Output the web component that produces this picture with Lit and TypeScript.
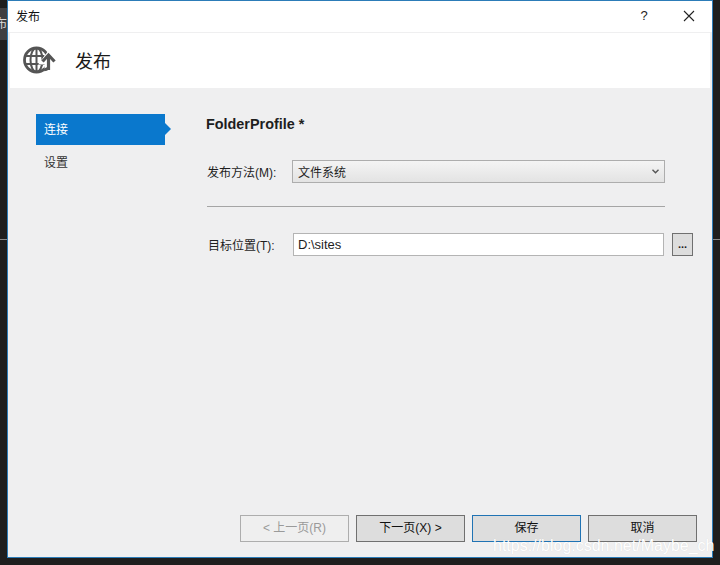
import { LitElement, html, css } from "lit";
import { customElement } from "lit/decorators.js";

@customElement("app-root")
export class AppRoot extends LitElement {
  static styles = css`
    :host {
      display: block;
      width: 720px;
      height: 565px;
      position: relative;
      overflow: hidden;
      background: #1e1e1e;
      font-family: "Liberation Sans", "Noto Sans CJK SC", sans-serif;
      font-size: 12px;
      color: #1e1e1e;
    }
    .tab {
      position: absolute;
      left: 0;
      top: 8px;
      width: 7px;
      height: 32px;
      background: #3f3f41;
      color: #ddd;
      overflow: hidden;
      font-size: 12px;
      line-height: 32px;
      text-indent: -5px;
      white-space: nowrap;
    }
    .line-l, .line-r {
      position: absolute;
      top: 239px;
      height: 1px;
      background: #8a8a8a;
    }
    .line-l { left: 0; width: 7px; }
    .line-r { left: 713px; width: 7px; }
    .window {
      position: absolute;
      left: 7px;
      top: 0;
      width: 706px;
      height: 558px;
      box-sizing: border-box;
      border: 1px solid #2c7cb8;
      background: #efeff0;
      display: flex;
      flex-direction: column;
    }
    .titlebar {
      height: 31px;
      flex: none;
      box-sizing: border-box;
      background: #fff;
      display: flex;
      align-items: center;
      padding: 0 17px 2px 8px;
      font-size: 12px;
      color: #111;
    }
    .titlebar .t { flex: 1; }
    .help {
      font-size: 13px;
      width: 16px;
      text-align: center;
      margin-right: 31px;
      color: #222;
    }
    .banner {
      height: 55px;
      flex: none;
      box-sizing: border-box;
      background: #fff;
      margin: 1px 2px 0 2px;
      display: flex;
      align-items: center;
      padding: 0 0 1px 13px;
      font-size: 18px;
      color: #1a1a1a;
    }
    .banner svg { margin-right: 18px; flex: none; }
    .body {
      flex: 1;
      display: flex;
      min-height: 0;
    }
    .nav {
      width: 199px;
      flex: none;
      padding: 26px 0 0 28px;
      box-sizing: border-box;
    }
    .nav-item {
      width: 129px;
      height: 31px;
      line-height: 33px;
      padding-left: 8px;
      box-sizing: border-box;
      position: relative;
      margin-bottom: 2px;
      color: #333;
    }
    .nav-item.on { background: #0a78cd; color: #fff; }
    .nav-item.on::after {
      content: "";
      position: absolute;
      left: 129px;
      top: 9px;
      border-left: 6px solid #0a78cd;
      border-top: 6px solid transparent;
      border-bottom: 6px solid transparent;
    }
    .main {
      flex: 1;
      display: flex;
      flex-direction: column;
      padding-top: 26px;
      min-width: 0;
    }
    .heading {
      font-weight: bold;
      font-size: 14.4px;
      height: 20px;
      line-height: 20px;
      color: #1e1e1e;
      margin-left: -1px;
      margin-bottom: 26px;
    }
    .row {
      display: flex;
      align-items: center;
      height: 23px;
    }
    .row label { width: 85px; flex: none; }
    .select {
      width: 373px;
      height: 23px;
      box-sizing: border-box;
      border: 1px solid #adadad;
      background: linear-gradient(#f4f4f4, #e3e3e3);
      display: flex;
      align-items: center;
      justify-content: space-between;
      padding: 0 5px;
    }
    hr {
      width: 458px;
      margin: 23px 0 26px;
      border: 0;
      border-top: 1px solid #a5a5a5;
      height: 0;
    }
    .row.target { margin-left: 1px; }
    .input {
      width: 371px;
      height: 23px;
      box-sizing: border-box;
      border: 1px solid #b4b4b4;
      background: #fff;
      font-size: 13px;
      line-height: 21px;
      padding: 0 4px;
    }
    .browse {
      width: 21px;
      height: 23px;
      box-sizing: border-box;
      margin-left: 8px;
      border: 1px solid #707070;
      background: #dddddd;
      text-align: center;
      font-size: 11px;
      line-height: 21px;
      font-weight: bold;
    }
    .footer {
      flex: none;
      display: flex;
      gap: 7px;
      padding: 0 0 15px 232px;
    }
    .btn {
      width: 109px;
      height: 27px;
      box-sizing: border-box;
      border: 1px solid #707070;
      background: #dddddd;
      text-align: center;
      line-height: 25px;
      color: #111;
    }
    .btn.disabled { border-color: #adadad; background: #efefef; color: #9a9a9a; }
    .btn.default { border-color: #2073b4; }
    .watermark {
      position: absolute;
      left: 493px;
      top: 534px;
      font-size: 16px;
      color: #fff;
      text-shadow: 0 0 1px rgba(0, 0, 0, 0.12);
      white-space: nowrap;
      line-height: 24px;
    }
  `;

  render() {
    return html`
      <div class="tab">布</div>
      <div class="line-l"></div>
      <div class="line-r"></div>
      <div class="window">
        <div class="titlebar">
          <span class="t">发布</span>
          <span class="help">?</span>
          <svg width="12" height="12" viewBox="0 0 12 12">
            <path d="M1 1L11 11M11 1L1 11" stroke="#222" stroke-width="1.1" fill="none" />
          </svg>
        </div>
        <div class="banner">
          <svg width="34" height="28" viewBox="0 0 34 28">
            <g fill="none" stroke="#555">
              <circle cx="13.5" cy="14" r="12" stroke-width="2.8" />
              <ellipse cx="13.5" cy="14" rx="6" ry="12" stroke-width="2" />
              <path d="M13.5 2V26M2 10H25M2 18H25" stroke-width="2" />
            </g>
            <path d="M25.5 28V9" fill="none" stroke="#fff" stroke-width="8" />
            <path d="M18 17L25.5 7L33 17Z" fill="#fff" stroke="#fff" stroke-width="3" />
            <path d="M25.5 24V10" fill="none" stroke="#555" stroke-width="3.2" />
            <path d="M19.5 15.5L25.5 9L31.5 15.5" fill="none" stroke="#555" stroke-width="3.2" />
            <path d="M25.5 22A12 12 0 0 1 21 24" fill="none" stroke="#555" stroke-width="2.8" />
          </svg>
          <span>发布</span>
        </div>
        <div class="body">
          <div class="nav">
            <div class="nav-item on">连接</div>
            <div class="nav-item">设置</div>
          </div>
          <div class="main">
            <div class="heading">FolderProfile *</div>
            <div class="row">
              <label>发布方法(M):</label>
              <div class="select">
                <span>文件系统</span>
                <svg width="7" height="5" viewBox="0 0 7 5">
                  <path d="M.5 .7L3.5 3.7L6.5 .7" fill="none" stroke="#555" stroke-width="1.4" />
                </svg>
              </div>
            </div>
            <hr />
            <div class="row target">
              <label>目标位置(T):</label>
              <div class="input">D:\\sites</div>
              <div class="browse">...</div>
            </div>
          </div>
        </div>
        <div class="footer">
          <div class="btn disabled">&lt; 上一页(R)</div>
          <div class="btn">下一页(X) &gt;</div>
          <div class="btn default">保存</div>
          <div class="btn">取消</div>
        </div>
      </div>
      <div class="watermark">https://blog.csdn.net/Maybe_ch</div>
    `;
  }
}
